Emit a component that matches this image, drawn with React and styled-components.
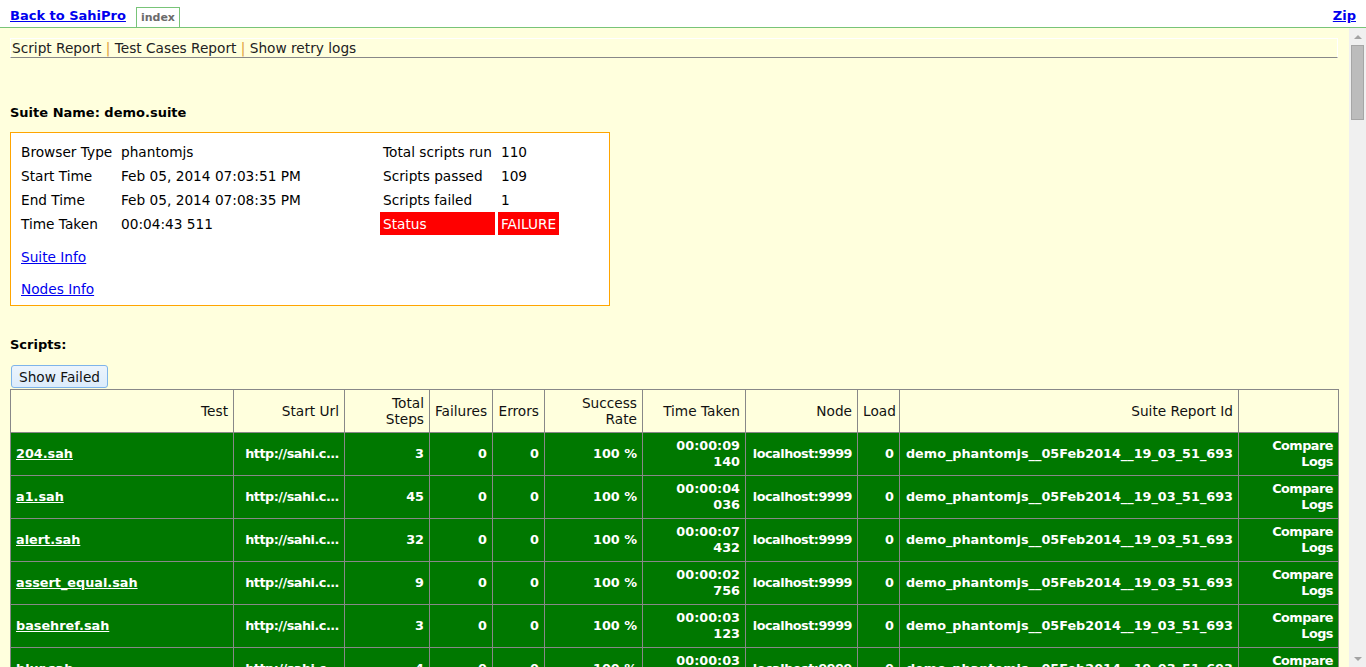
import React from "react";
import styled, { createGlobalStyle } from "styled-components";

const GlobalStyle = createGlobalStyle`
  html, body { margin: 0; padding: 0; height: 100%; overflow: hidden; }
  body {
    font-family: "DejaVu Sans", Verdana, sans-serif;
    font-size: 13.7px;
    color: #000;
    background: #fff;
  }
`;

const Page = styled.div`
  display: flex;
  flex-direction: column;
  height: 100vh;
`;

const TopBar = styled.div`
  display: flex;
  align-items: flex-end;
  flex-shrink: 0;
  height: 27px;
  padding: 0 10px;
  border-bottom: 1px solid #78c478;
  background: #fff;
`;

const TopLink = styled.a`
  font-size: 13px;
  font-weight: bold;
  color: #0000ee;
  text-decoration: underline;
  line-height: 16px;
  margin-bottom: 3px;
  margin-left: ${(p) => (p.$right ? "auto" : "0")};
`;

const Tab = styled.div`
  margin-left: 10px;
  width: 42px;
  height: 19px;
  border: 1px solid #78c478;
  border-bottom: none;
  text-align: center;
  font-size: 11px;
  font-weight: bold;
  color: #6b6b6b;
  line-height: 19px;
`;

const Frame = styled.div`
  flex: 1;
  min-height: 0;
  display: flex;
  background: #ffffdd;
`;

const FrameContent = styled.div`
  flex: 1;
  min-width: 0;
  overflow: hidden;
  padding: 10px 11px 0 10px;
`;

const ScrollBar = styled.div`
  width: 17px;
  flex-shrink: 0;
  display: flex;
  flex-direction: column;
  background: #f0f0f0;
`;

const ScrollArrow = styled.div`
  height: 17px;
  flex-shrink: 0;
  display: flex;
  align-items: center;
  justify-content: center;

  &::before {
    content: "";
    width: 0;
    height: 0;
    border-left: 4px solid transparent;
    border-right: 4px solid transparent;
    ${(p) =>
      p.$down
        ? "border-top: 4px solid #a3a3a3;"
        : "border-bottom: 4px solid #a3a3a3;"}
  }
`;

const ScrollTrack = styled.div`
  flex: 1;
  padding: 0 2px;
`;

const ScrollThumb = styled.div`
  height: 75px;
  box-sizing: border-box;
  background: #bcbcbc;
  border: 1px solid #a6a6a6;
`;

const NavBar = styled.div`
  height: 18px;
  line-height: 18px;
  padding-left: 1px;
  border: 1px solid #fff;
  border-bottom-color: #888;
  color: #222;
  white-space: nowrap;
`;

const NavSep = styled.span`
  color: #e0a03a;
`;

const SectionTitle = styled.div`
  font-size: 13px;
  font-weight: bold;
  line-height: 16px;
  margin-top: ${(p) => p.$top}px;
`;

const InfoBox = styled.div`
  box-sizing: border-box;
  width: 600px;
  margin-top: 11px;
  padding: 6px 10px 0 10px;
  border: 1px solid #ffa500;
  background: #fff;
`;

const InfoRow = styled.div`
  display: flex;
  align-items: flex-start;
`;

const LeftTable = styled.table`
  width: 356px;
  border-spacing: 0 1px;
  td { height: 23px; padding: 0; vertical-align: middle; white-space: nowrap; }
  td:first-child { width: 100px; }
`;

const RightTable = styled.table`
  border-spacing: 3px 1px;
  td { height: 23px; padding: 0 3px; vertical-align: middle; white-space: nowrap; }
  td:first-child { width: 108px; }
`;

const StatusCell = styled.td`
  && {
    background: #ff0000;
    color: #fff;
  }
`;

const LinkList = styled.div`
  margin-top: 5px;
`;

const LinkRow = styled.div`
  line-height: 32px;
  a { color: #0000ee; text-decoration: underline; }
`;

const Button = styled.button`
  display: block;
  margin: 12px 0 1px 1px;
  height: 23px;
  padding: 0 7px;
  font-family: inherit;
  font-size: 13.7px;
  color: #111;
  border: 1px solid #7eb4ea;
  border-radius: 3px;
  background: linear-gradient(#ecf4fc, #dcecfc);
`;

const Table = styled.table`
  width: 100%;
  table-layout: fixed;
  border-collapse: collapse;
  border: 1px solid #888;
`;

const Th = styled.th`
  height: 42px;
  padding: 0 5px;
  border: 1px solid #888;
  background: #ffffdd;
  font-weight: normal;
  text-align: right;
  vertical-align: middle;
  line-height: 16px;
  color: #111;
  white-space: nowrap;
`;

const Tr = styled.tr`
  background: ${(p) => (p.$fail ? "#ff0000" : "#007800")};
`;

const Td = styled.td`
  height: 42px;
  padding: 0 5px;
  border: 1px solid #888;
  color: #fff;
  font-size: 12.8px;
  font-weight: bold;
  letter-spacing: ${(p) => (p.$tight ? "-0.5px" : "normal")};
  text-align: ${(p) => (p.$left ? "left" : "right")};
  vertical-align: middle;
  line-height: 16px;
  white-space: nowrap;
  overflow: hidden;
  a { color: #fff; text-decoration: underline; }
`;

const columns = [
  { w: 223, label: "Test" },
  { w: 111, label: "Start Url" },
  { w: 85, label: ["Total", "Steps"] },
  { w: 63, label: "Failures" },
  { w: 52, label: "Errors" },
  { w: 98, label: ["Success", "Rate"] },
  { w: 103, label: "Time Taken" },
  { w: 112, label: "Node" },
  { w: 42, label: "Load" },
  { w: 339, label: "Suite Report Id" },
  { w: 100, label: "" },
];

const known = [
  ["204.sah", 3, "00:00:09", "140"],
  ["a1.sah", 45, "00:00:04", "036"],
  ["alert.sah", 32, "00:00:07", "432"],
  ["assert_equal.sah", 9, "00:00:02", "756"],
  ["basehref.sah", 3, "00:00:03", "123"],
  ["blur.sah", 4, "00:00:03", "318"],
  ["browser_types.sah", 12, "00:00:02", "904"],
];

export default function App() {
  return (
    <>
      <GlobalStyle />
      <Page>
        <TopBar>
          <TopLink href="#">Back to SahiPro</TopLink>
          <Tab>index</Tab>
          <TopLink href="#" $right>Zip</TopLink>
        </TopBar>
        <Frame>
          <FrameContent>
            <NavBar>
              Script Report <NavSep>|</NavSep> Test Cases Report <NavSep>|</NavSep> Show retry logs
            </NavBar>

            <SectionTitle $top={47}>Suite Name: demo.suite</SectionTitle>

            <InfoBox>
              <InfoRow>
                <LeftTable>
                  <tbody>
                    <tr><td>Browser Type</td><td>phantomjs</td></tr>
                    <tr><td>Start Time</td><td>Feb 05, 2014 07:03:51 PM</td></tr>
                    <tr><td>End Time</td><td>Feb 05, 2014 07:08:35 PM</td></tr>
                    <tr><td>Time Taken</td><td>00:04:43 511</td></tr>
                  </tbody>
                </LeftTable>
                <RightTable>
                  <tbody>
                    <tr><td>Total scripts run</td><td>110</td></tr>
                    <tr><td>Scripts passed</td><td>109</td></tr>
                    <tr><td>Scripts failed</td><td>1</td></tr>
                    <tr><StatusCell>Status</StatusCell><StatusCell>FAILURE</StatusCell></tr>
                  </tbody>
                </RightTable>
              </InfoRow>
              <LinkList>
                <LinkRow><a href="#">Suite Info</a></LinkRow>
                <LinkRow><a href="#">Nodes Info</a></LinkRow>
              </LinkList>
            </InfoBox>

            <SectionTitle $top={31}>Scripts:</SectionTitle>
            <Button type="button">Show Failed</Button>

            <Table>
              <colgroup>
                {columns.map((c, i) => (
                  <col key={i} style={{ width: c.w }} />
                ))}
              </colgroup>
              <thead>
                <tr>
                  {columns.map((c, i) => (
                    <Th key={i}>
                      {Array.isArray(c.label) ? (
                        <>
                          {c.label[0]}
                          <br />
                          {c.label[1]}
                        </>
                      ) : (
                        c.label
                      )}
                    </Th>
                  ))}
                </tr>
              </thead>
              <tbody>
                {known.map(([name, steps, t, ms], i) => (
                  <Tr key={i}>
                    <Td $left><a href="#">{name}</a></Td>
                    <Td $tight>http://sahi.c...</Td>
                    <Td>{steps}</Td>
                    <Td>0</Td>
                    <Td>0</Td>
                    <Td>100 %</Td>
                    <Td>
                      {t}
                      <br />
                      {ms}
                    </Td>
                    <Td $tight>localhost:9999</Td>
                    <Td>0</Td>
                    <Td>demo_phantomjs__05Feb2014__19_03_51_693</Td>
                    <Td $tight>
                      Compare
                      <br />
                      Logs
                    </Td>
                  </Tr>
                ))}
              </tbody>
            </Table>
          </FrameContent>
          <ScrollBar>
            <ScrollArrow />
            <ScrollTrack>
              <ScrollThumb />
            </ScrollTrack>
            <ScrollArrow $down />
          </ScrollBar>
        </Frame>
      </Page>
    </>
  );
}
